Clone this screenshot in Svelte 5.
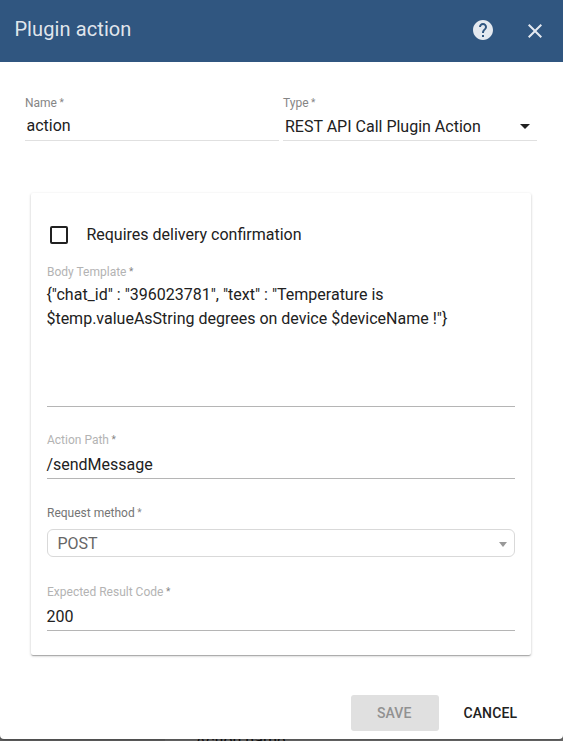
<script>
  const type = 'REST API Call Plugin Action';
  const body = '{"chat_id" : "396023781", "text" : "Temperature is $temp.valueAsString degrees on device $deviceName !"}';
</script>

<div class="page">
  <div class="behind"><span>Action name</span></div>
  <section class="dialog">
    <header>
      <h2>Plugin action</h2>
      <svg class="help" viewBox="0 0 24 24"><path d="M12 2C6.48 2 2 6.48 2 12s4.48 10 10 10 10-4.48 10-10S17.52 2 12 2zm1 17h-2v-2h2v2zm2.07-7.75l-.9.92C13.45 12.9 13 13.5 13 15h-2v-.5c0-1.1.45-2.1 1.17-2.83l1.24-1.26c.37-.36.59-.86.59-1.41 0-1.1-.9-2-2-2s-2 .9-2 2H8c0-2.21 1.79-4 4-4s4 1.79 4 4c0 .88-.36 1.68-.93 2.25z" /></svg>
      <svg class="close" viewBox="0 0 24 24"><path d="M19 6.41l-1.41-1.41-5.59 5.59-5.59-5.59-1.41 1.41 5.59 5.59-5.59 5.59 1.41 1.41 5.59-5.59 5.59 5.59 1.41-1.41-5.59-5.59z" /></svg>
    </header>

    <div class="top">
      <div class="field light">
        <div class="label">Name<i>*</i></div>
        <div class="value name">action</div>
      </div>
      <div class="field light">
        <div class="label">Type<i>*</i></div>
        <div class="value type"><span>{type}</span><b class="caret"></b></div>
      </div>
    </div>

    <div class="card">
      <div class="check"><span class="box"></span><span>Requires delivery confirmation</span></div>
      <div class="field body">
        <div class="label pale">Body Template<i>*</i></div>
        <div class="value">{body}</div>
      </div>
      <div class="field path">
        <div class="label pale">Action Path<i>*</i></div>
        <div class="value">/sendMessage</div>
      </div>
      <div class="method">
        <div class="label dark">Request method<i>*</i></div>
        <div class="select"><span>POST</span><b class="caret"></b></div>
      </div>
      <div class="field code">
        <div class="label pale">Expected Result Code<i>*</i></div>
        <div class="value">200</div>
      </div>
    </div>

    <footer>
      <button class="save" disabled>Save</button>
      <button class="cancel">Cancel</button>
    </footer>
  </section>
</div>

<style>
  .page {
    position: relative;
    width: 563px;
    height: 741px;
    overflow: hidden;
    background: #666;
    font: 16px/24px Roboto, sans-serif;
    color: #212121;
  }
  .page * { box-sizing: border-box; }
  .behind {
    position: absolute;
    left: 0;
    right: 0;
    bottom: -12px;
    height: 24px;
    padding-left: 195.5px;
    background: linear-gradient(90deg, #626262 165px, #6c6c6c 165px);
    color: #111;
  }
  .dialog {
    position: relative;
    display: flex;
    flex-direction: column;
    height: 739px;
    background: #fff;
    border-radius: 0 0 4px 4px;
    box-shadow: 0 1px 3px rgba(0, 0, 0, .3);
  }
  header {
    display: flex;
    flex: none;
    height: 62px;
    padding: 0 16px 0 14.4px;
    background: #305680;
    color: rgba(255, 255, 255, .87);
  }
  h2 {
    flex: 1;
    margin: 0;
    padding-top: 17px;
    font-size: 20px;
    font-weight: 400;
    line-height: 24px;
    letter-spacing: .1px;
  }
  svg { width: 24px; height: 24px; fill: #e4e9f0; }
  .help { margin: 18px 28.5px 0 0; }
  .close { margin-top: 19px; }
  .top {
    display: flex;
    flex: none;
    gap: 4px;
    padding: 33px 26px 0 25px;
    height: 131px;
  }
  .top .field { width: 254px; height: 46px; }
  .label {
    display: flex;
    height: 16px;
    font-size: 12px;
    line-height: 16px;
    color: #858585;
  }
  .label i { margin: -1px 0 0 2.5px; font-size: 10px; font-style: normal; line-height: 17px; color: #858585; }
  .pale { color: #b3b3b3; }
  .dark { color: #757575; }
  .field { border-bottom: 1px solid #b5b5b5; }
  .light { border-color: #e0e0e0; }
  .name { padding: 3px 0 0 1.5px; }
  .type { display: flex; justify-content: space-between; padding: 4px 7.5px 0 2px; }
  .caret {
    margin-top: 9px;
    width: 0;
    height: 0;
    border: 5px solid transparent;
    border-top-color: #212121;
    border-bottom: 0;
  }
  .type .caret { margin-top: 8.5px; }
  .card {
    flex: none;
    margin: 0 32px 0 31px;
    height: 462px;
    padding: 30px 16px 0;
    border-radius: 2px;
    box-shadow: 0 1px 3px 0 rgba(0, 0, 0, .2), 0 1px 1px 0 rgba(0, 0, 0, .14), 0 2px 1px -1px rgba(0, 0, 0, .12);
  }
  .check { display: flex; align-items: center; gap: 18.4px; height: 24px; padding-left: 3px; }
  .box { width: 18px; height: 18px; border: 2px solid #212121; border-radius: 2px; }
  .body { margin-top: 17px; height: 143px; }
  .body .value { padding-top: 3px; }
  .card .value { margin-left: -.6px; }
  .path { margin-top: 25px; height: 47px; }
  .path .value, .code .value { padding-top: 5px; }
  .method { margin-top: 26px; }
  .select {
    display: flex;
    justify-content: space-between;
    height: 28px;
    margin-top: 8px;
    padding: 2px 7px 0 9.4px;
    border: 1px solid #d9d9d9;
    border-radius: 6px;
    color: #666;
  }
  .select .caret { margin-top: 10px; border-width: 5px 4px 0; border-top-color: #999; }
  .code { margin-top: 27px; height: 47px; }
  footer { display: flex; justify-content: flex-end; padding: 40px 36px 0 0; gap: 14px; }
  button {
    height: 36px;
    padding: 0;
    border: 0;
    border-radius: 3px;
    background: none;
    font: 500 14px/36px Roboto, sans-serif;
    letter-spacing: .14px;
    text-transform: uppercase;
    color: #212121;
  }
  .save { width: 88px; padding-right: 1.5px; background: #e0e0e0; color: #919191; }
  .cancel { width: 74px; padding-left: .6px; }
</style>
